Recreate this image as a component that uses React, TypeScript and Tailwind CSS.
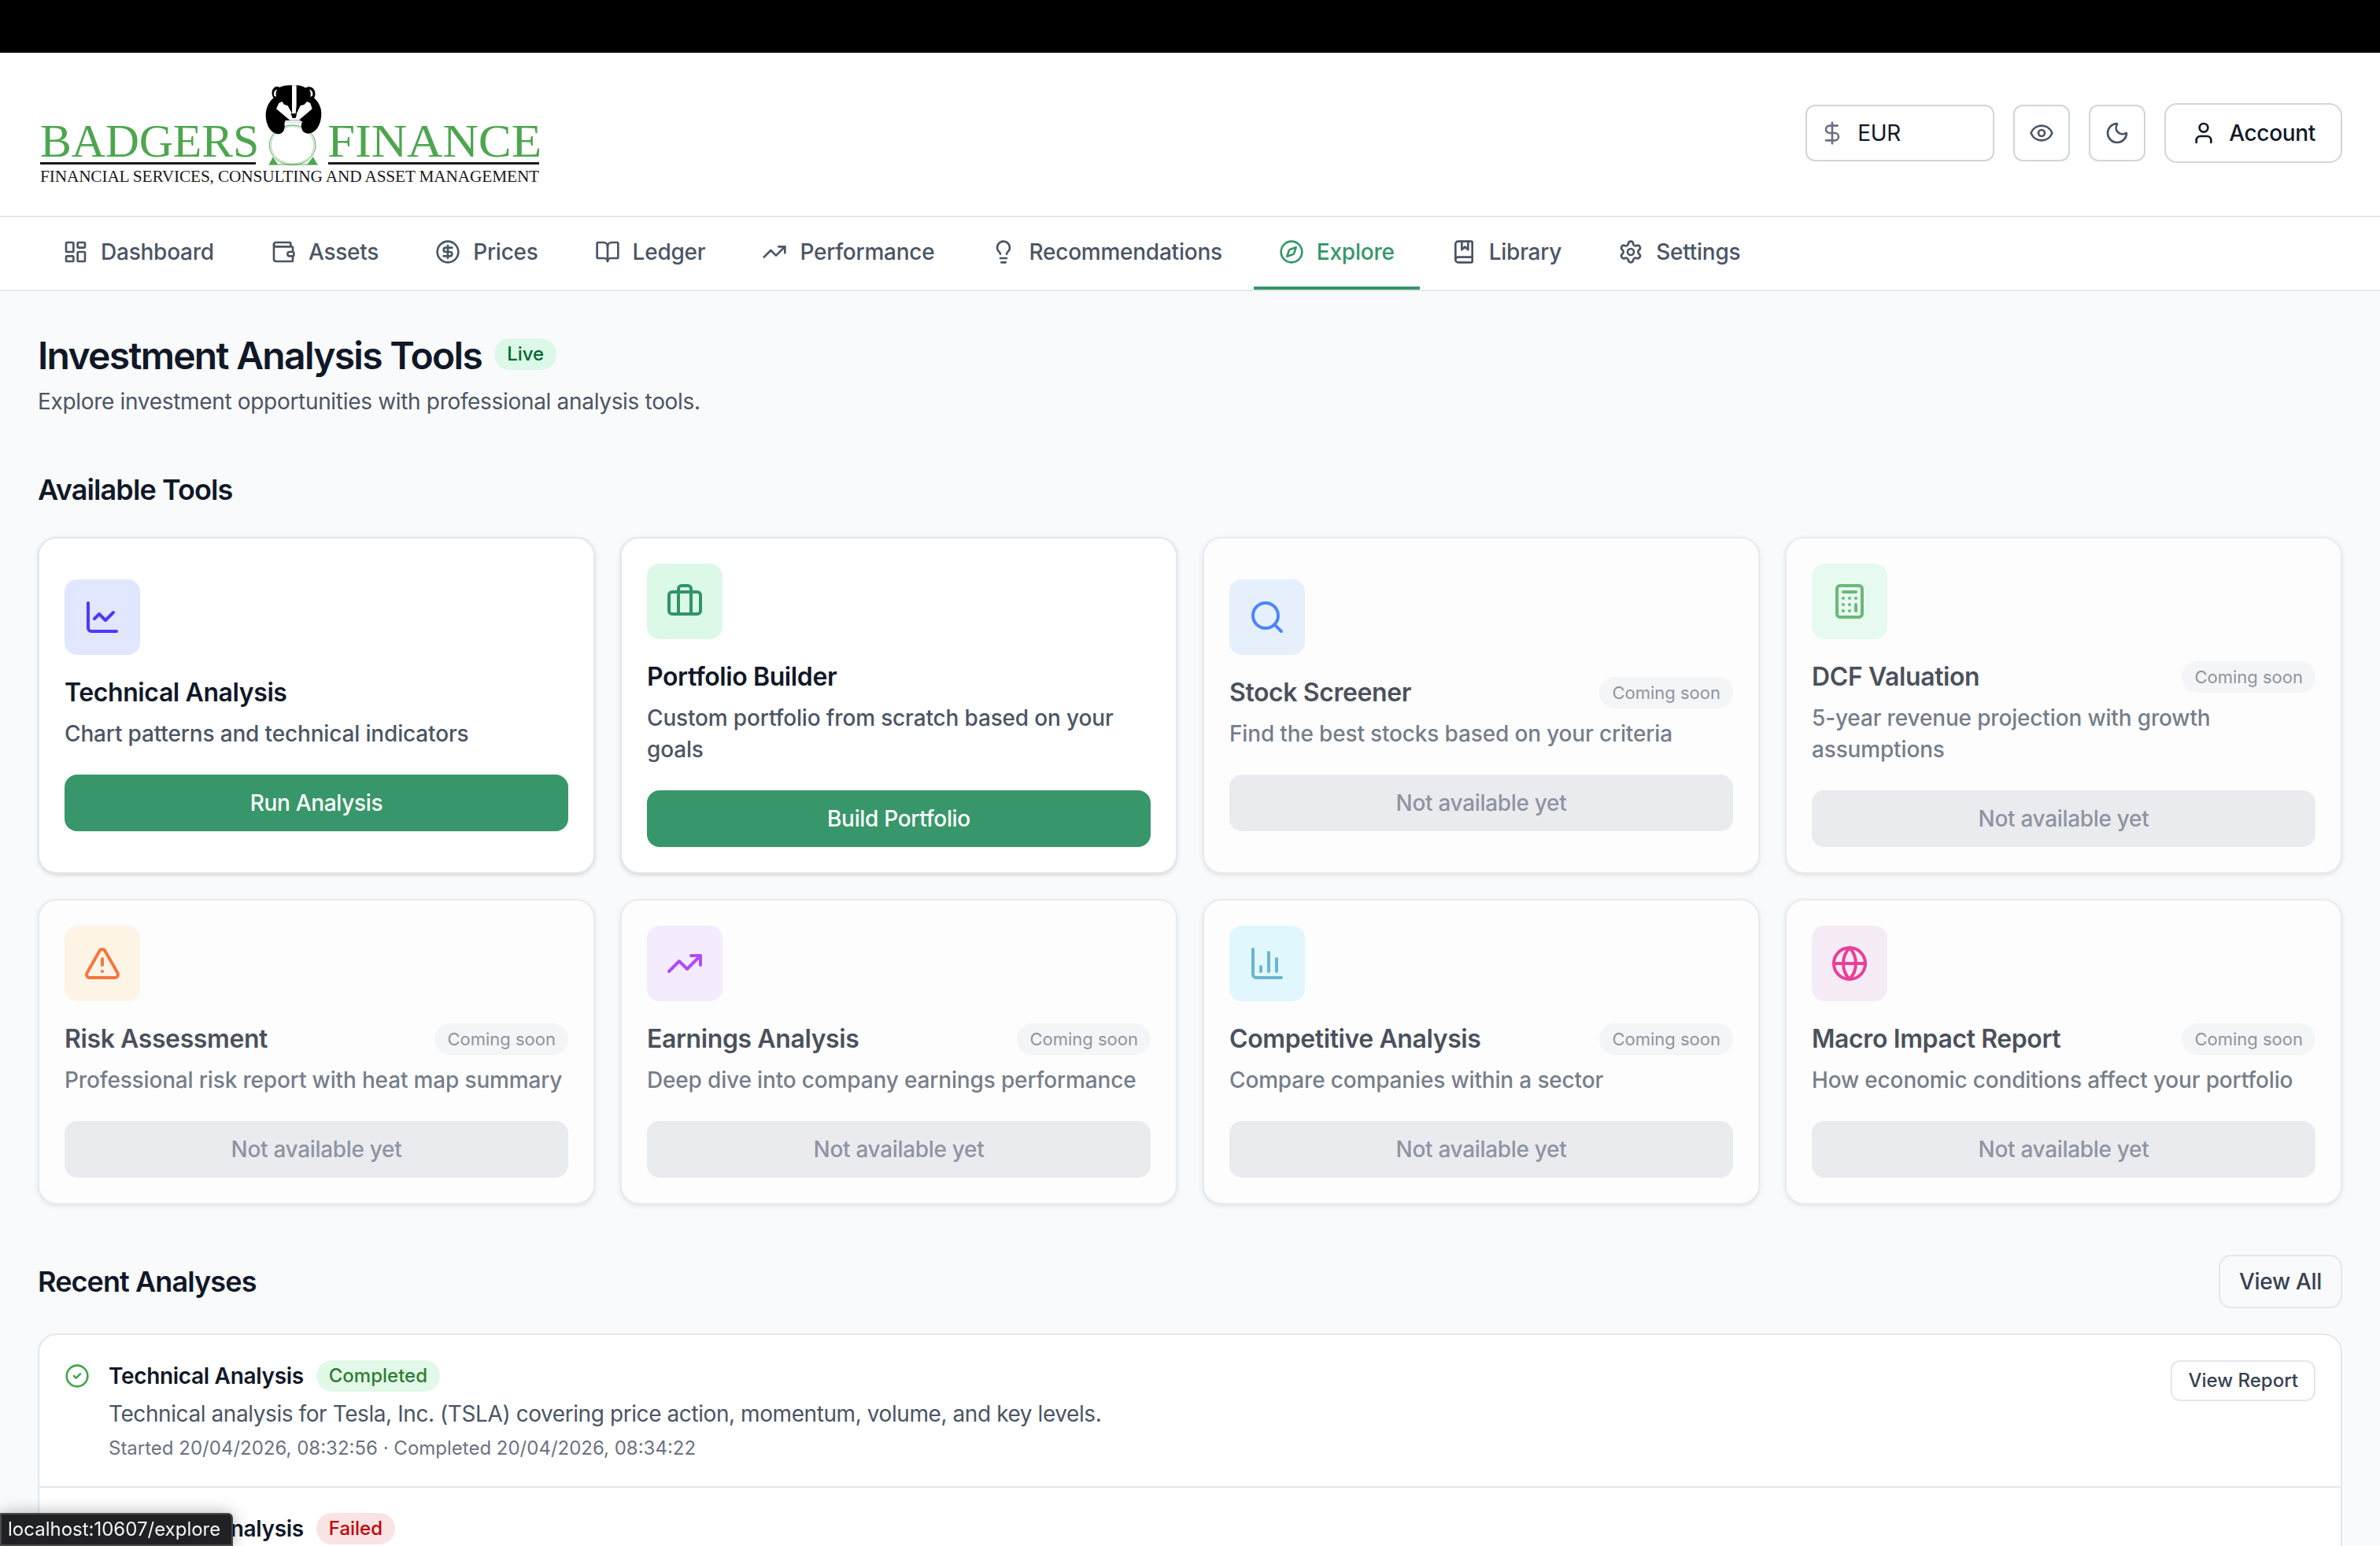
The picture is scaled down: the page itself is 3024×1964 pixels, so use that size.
import {
  LayoutDashboard, Wallet, CircleDollarSign, BookOpen, TrendingUp, Lightbulb, Compass, BookMarked, Settings,
  DollarSign, Eye, Moon, User, ChartLine, Briefcase, Search, Calculator, TriangleAlert, ChartColumn, Globe, CircleCheck,
} from "lucide-react";

const nav = [
  { label: "Dashboard", icon: LayoutDashboard },
  { label: "Assets", icon: Wallet },
  { label: "Prices", icon: CircleDollarSign },
  { label: "Ledger", icon: BookOpen },
  { label: "Performance", icon: TrendingUp },
  { label: "Recommendations", icon: Lightbulb },
  { label: "Explore", icon: Compass, active: true },
  { label: "Library", icon: BookMarked },
  { label: "Settings", icon: Settings },
];

const tools = [
  { title: "Technical Analysis", desc: "Chart patterns and technical indicators", icon: ChartLine, box: "bg-indigo-100", color: "text-indigo-600", action: "Run Analysis" },
  { title: "Portfolio Builder", desc: "Custom portfolio from scratch based on your goals", icon: Briefcase, box: "bg-[#dcf8e7]", color: "text-[#2f9564]", action: "Build Portfolio" },
  { title: "Stock Screener", desc: "Find the best stocks based on your criteria", icon: Search, box: "bg-[#e0edfd]", color: "text-blue-600" },
  { title: "DCF Valuation", desc: "5-year revenue projection with growth assumptions", icon: Calculator, box: "bg-[#e2faeb]", color: "text-[#3ca24d]" },
  { title: "Risk Assessment", desc: "Professional risk report with heat map summary", icon: TriangleAlert, box: "bg-[#fff3e0]", color: "text-orange-600" },
  { title: "Earnings Analysis", desc: "Deep dive into company earnings performance", icon: TrendingUp, box: "bg-purple-100", color: "text-purple-600" },
  { title: "Competitive Analysis", desc: "Compare companies within a sector", icon: ChartColumn, box: "bg-[#d7f7fe]", color: "text-[#3c9ec2]" },
  { title: "Macro Impact Report", desc: "How economic conditions affect your portfolio", icon: Globe, box: "bg-[#f6e8f4]", color: "text-pink-600" },
];

function Logo() {
  const green = "#4da64f";
  return (
    <svg width="321" height="66" viewBox="48 104 642 132" aria-label="Badgers Finance">
      <text x="51" y="198" fontFamily="Liberation Serif, serif" fontSize="60" fill={green} textLength="278" lengthAdjust="spacingAndGlyphs">BADGERS</text>
      <text x="416" y="198" fontFamily="Liberation Serif, serif" fontSize="60" fill={green} textLength="272" lengthAdjust="spacingAndGlyphs">FINANCE</text>
      <rect x="51" y="205" width="274" height="3" fill="#1a1a1a" />
      <rect x="417" y="205" width="268" height="3" fill="#1a1a1a" />
      <text x="51" y="230" fontFamily="Liberation Serif, serif" fontSize="21" fill="#1a1a1a" textLength="634" lengthAdjust="spacingAndGlyphs">FINANCIAL SERVICES, CONSULTING AND ASSET MANAGEMENT</text>
      <g transform="translate(325 100) scale(0.3333)">
        <ellipse cx="140" cy="250" rx="88" ry="76" fill="#fff" stroke={green} strokeWidth="3" />
        <ellipse cx="140" cy="250" rx="82" ry="71" fill="#fff" stroke={green} strokeWidth="1.5" />
        <polygon points="50,325 65,295 85,325" fill={green} />
        <polygon points="236,325 218,295 195,325" fill={green} />
        <line x1="50" y1="324" x2="236" y2="324" stroke={green} strokeWidth="3" />
        <path d="M145 22 C120 20 100 24 90 30 C82 24 66 28 62 45 C60 55 63 65 68 70 C50 85 38 110 38 135 C38 170 55 205 85 208 C100 208 110 195 110 180 C110 170 108 165 112 160 L178 160 C172 170 172 180 178 195 C185 205 200 208 208 205 C235 198 250 165 250 130 C250 105 238 85 222 70 C228 62 228 48 222 38 C212 25 198 26 190 32 C178 24 165 20 145 22 Z" fill="#000" />
        <path d="M138 22 L155 22 L155 100 L152 130 L138 130 Z" fill="#fff" />
        <path d="M78 112 L88 90 L100 84 L108 95 L122 100 L138 130 L155 130 L170 100 L185 95 L195 84 L208 90 L215 112 L170 150 L165 155 L130 155 Z" fill="#fff" />
        <path d="M133 130 L157 130 L152 147 L140 147 Z" fill="#000" />
        <path d="M70 62 C66 50 72 40 82 38 C76 46 76 55 78 66 Z" fill="#fff" />
        <path d="M216 62 C220 50 214 40 204 38 C210 46 210 55 208 66 Z" fill="#fff" />
        <rect x="112" y="156" width="60" height="9" rx="3" fill="#eee" stroke="#aaa" strokeWidth="1" />
      </g>
    </svg>
  );
}

function ToolCard({ tool }: { tool: (typeof tools)[number] }) {
  const Icon = tool.icon;
  const live = Boolean(tool.action);
  return (
    <div className={`flex flex-col justify-center rounded-xl border border-gray-200 bg-white p-4 shadow-sm ${live ? "" : "opacity-75"}`}>
      <div className={`mb-3 flex h-12 w-12 items-center justify-center rounded-lg ${tool.box}`}>
        <Icon size={24} className={tool.color} />
      </div>
      <div className="flex items-center justify-between gap-2">
        <h3 className="text-base font-semibold tracking-[-0.2px] text-gray-900">{tool.title}</h3>
        {!live && (
          <span className="rounded-full bg-gray-100 px-2 py-0.5 text-[11px] leading-4 tracking-normal text-gray-500">Coming soon</span>
        )}
      </div>
      <p className="mt-1 mb-4 text-sm font-medium tracking-[-0.08px] text-gray-600">{tool.desc}</p>
      {live ? (
        <button className="h-9 w-full rounded-lg bg-[#38976a] text-sm font-medium text-white">{tool.action}</button>
      ) : (
        <button disabled className="h-9 w-full rounded-lg bg-gray-200 text-sm font-medium text-gray-500">Not available yet</button>
      )}
    </div>
  );
}

export default function App() {
  return (
    <div className="relative h-[982px] w-[1512px] overflow-hidden bg-gray-50 font-[Inter,sans-serif] tracking-[-0.16px] [zoom:2]">
      <div className="h-[33.5px] bg-black" />
      <header className="flex h-[104.5px] items-center justify-between border-b border-gray-200 bg-white px-6">
        <Logo />
        <div className="flex items-center gap-3 pb-0.5">
          <div className="flex h-9 w-[120px] items-center gap-2 rounded-md border border-gray-300 bg-white pl-2 text-sm text-gray-900">
            <DollarSign size={16} className="text-gray-500" />
            <span>EUR</span>
          </div>
          <button className="flex h-9 w-9 items-center justify-center rounded-md border border-gray-300 text-gray-600"><Eye size={16} /></button>
          <button className="flex h-9 w-9 items-center justify-center rounded-md border border-gray-300 text-gray-600"><Moon size={16} /></button>
          <button className="flex items-center gap-2 rounded-lg border border-gray-300 px-4 py-2 text-sm font-medium text-gray-900"><User size={16} />Account</button>
        </div>
      </header>
      <nav className="flex gap-1 border-b border-gray-200 bg-white px-6">
        {nav.map(({ label, icon: Icon, active }) => (
          <a
            key={label}
            className={`flex items-center gap-2 border-b-2 px-4 py-3 text-sm font-medium tracking-[-0.12px] ${active ? "border-[#349768] text-[#349768]" : "border-transparent text-gray-600"}`}
          >
            <Icon size={16} />
            {label}
          </a>
        ))}
      </nav>
      <main className="p-6">
        <div className="flex items-center gap-2">
          <h1 className="translate-y-px text-2xl font-semibold tracking-[-0.85px] text-gray-900">Investment Analysis Tools</h1>
          <span className="rounded-full bg-[#dcf8e7] px-2 py-0.5 text-xs font-medium tracking-normal text-green-800">Live</span>
        </div>
        <p className="mt-1 text-sm text-gray-600">Explore investment opportunities with professional analysis tools.</p>

        <h2 className="mt-8 mb-4 text-lg font-semibold tracking-[-0.45px] text-gray-900">Available Tools</h2>
        <div className="grid grid-cols-4 gap-4">
          {tools.map((t) => (
            <ToolCard key={t.title} tool={t} />
          ))}
        </div>

        <div className="mt-8 mb-4 flex items-center justify-between">
          <h2 className="text-lg font-semibold tracking-[-0.45px] text-gray-900">Recent Analyses</h2>
          <button className="rounded-lg border border-gray-200 px-3 py-1.5 text-sm font-medium text-gray-700">View All</button>
        </div>
        <div className="rounded-xl border border-gray-200 bg-white">
          <div className="flex items-start justify-between border-b border-gray-200 p-4">
            <div className="flex gap-3">
              <CircleCheck size={16} className="mt-0.5 text-[#43a550]" />
              <div>
                <div className="flex items-center gap-2">
                  <span className="text-sm font-semibold text-gray-900">Technical Analysis</span>
                  <span className="rounded-full bg-[#e2f8e8] px-2 py-0.5 text-xs font-medium tracking-normal text-[#2e7d32]">Completed</span>
                </div>
                <p className="mt-1 text-sm tracking-[-0.21px] text-gray-600">Technical analysis for Tesla, Inc. (TSLA) covering price action, momentum, volume, and key levels.</p>
                <p className="mt-1 text-xs tracking-normal text-gray-500">Started 20/04/2026, 08:32:56 · Completed 20/04/2026, 08:34:22</p>
              </div>
            </div>
            <button className="rounded-md border border-gray-200 px-2.5 py-1 text-xs font-medium tracking-normal text-gray-700">View Report</button>
          </div>
          <div className="flex items-start justify-between p-4">
            <div className="flex gap-3">
              <div className="h-4 w-4" />
              <div className="flex items-center gap-2">
                <span className="text-sm font-semibold text-gray-900">Technical Analysis</span>
                <span className="rounded-full bg-[#fae3e3] px-2 py-0.5 text-xs font-medium tracking-normal text-red-700">Failed</span>
              </div>
            </div>
          </div>
        </div>
      </main>
      <div className="fixed bottom-0 left-0 h-[21px] w-[148px] rounded-tr-[3px] border border-[#4a4a4a] bg-[#202124] px-[4px] text-xs leading-[19px] tracking-normal text-gray-100 shadow-[0_0_10px_rgba(0,0,0,0.3)]">
        localhost:10607/explore
      </div>
    </div>
  );
}
